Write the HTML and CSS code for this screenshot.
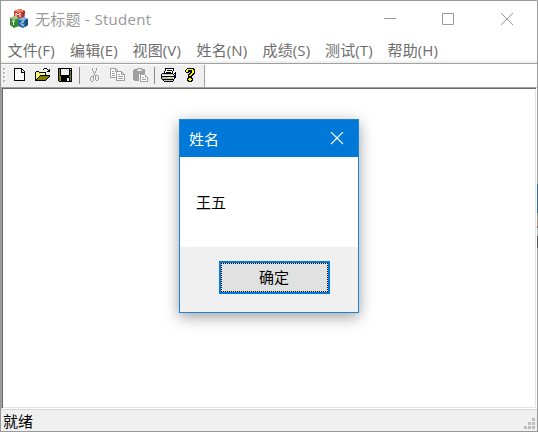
FILE: index.html
```
<!DOCTYPE html>
<html lang="zh-CN">
<head>
<meta charset="utf-8">
<title>无标题 - Student</title>
<link rel="stylesheet" href="styles.css">
</head>
<body>
<div class="window">
  <header class="titlebar">
    <svg class="app-icon" width="20" height="21" viewBox="0 0 20 21">
      <path fill="#c83a2c" d="M5 3l6-2 5 2-1 8-6 1-4-2z"/>
      <path fill="#ed8064" d="M5 3l6-2 5 2-6 2z"/>
      <path fill="#a52d24" d="M14 3.500l2-.5-1 8-2 1z"/>
      <path fill="#388b34" d="M1 10l5-2 4 2v8l-5 2-4-3z"/>
      <path fill="#a1c77d" d="M1 10l5-2 4 2-5 2z"/>
      <path fill="#266ba6" d="M9 11l6-2 4 2v6l-5 3-5-2z"/>
      <path fill="#85b8dc" d="M9 11l6-2 4 2-5 2z"/>
      <path fill="#184f82" d="M16 12l3-1v6l-3 2z"/>
      <path fill="none" stroke="#fff" stroke-width="1" d="M7 9V5l2 2 2-2v4M3 13h3M4.500 13v4M15 14c-4-1-4 4 0 3"/>
    </svg>
    <h1 class="title">无标题 - Student</h1>
    <div class="controls">
      <svg width="58" height="36" viewBox="0 0 58 36"><path d="M13 17.500h12"/></svg>
      <svg width="58" height="36" viewBox="0 0 58 36"><path d="M13.500 12.500h11v11h-11z"/></svg>
      <svg width="49" height="36" viewBox="0 0 49 36"><path d="M14 12l12 12M26 12L14 24"/></svg>
    </div>
  </header>
  <nav class="menubar">
    <span>文件(F)</span><span>编辑(E)</span><span class="wide">视图(V)</span><span class="widest">姓名(N)</span><span>成绩(S)</span><span>测试(T)</span><span>帮助(H)</span>
  </nav>
  <div class="toolbar-row">
    <div class="toolbar">
      <div class="grip"><i></i><i></i><i></i><i></i></div>
      <svg class="tool" viewBox="0 0 16 16"><path fill="#fff" d="M3 2h6v4h4v8H3z"/><path fill="#000" d="M2 1h8v1H2zM2 2h1v12H2zM2 13h11v1H2zM12 5h1v9h-1zM9 2h1v4H9zM10 2h1v1h-1zM11 3h1v1h-1zM12 4h1v1h-1zM9 5h4v1H9z"/></svg>
      <svg class="tool" viewBox="0 0 16 16"><path fill="#fff" d="M1 5h3v1h6v3H5v1H4v1H3v1H2v1H1z"/><path fill="#ff0" d="M1 5h1v1H1zM3 5h1v1H3zM2 6h1v1H2zM4 6h1v1H4zM6 6h1v1H6zM8 6h1v1H8zM1 7h1v1H1zM3 7h1v1H3zM5 7h1v1H5zM7 7h1v1H7zM9 7h1v1H9zM2 8h1v1H2zM4 8h1v1H4zM1 9h1v1H1zM3 9h1v1H3zM2 10h1v1H2zM1 11h1v1H1z"/><path fill="#808000" d="M5 9h9v1h-1v1h-1v1h-1v1H2v-1h1v-1h1v-1h1z"/><path fill="#000" d="M1 4h3v1H1zM0 5h1v9H0zM4 5h7v1H4zM10 6h1v2h-1zM5 8h10v1H5zM4 9h1v1H4zM3 10h1v1H3zM2 11h1v1H2zM1 12h1v1H1zM14 9h1v1h-1zM13 10h1v1h-1zM12 11h1v1h-1zM11 12h1v1h-1zM0 13h11v1H0zM9 1h3v1H9zM8 2h1v1H8zM12 2h1v1h-1zM14 2h1v3h-3V4h1V3h1z"/></svg>
      <svg class="tool" viewBox="0 0 16 16"><path fill="#000" d="M0 1h14v14H1v-1H0z"/><path fill="#808000" d="M1 2h1v7h1v1h8V9h1V4h1v10h-1v-4H3v4H1z"/><path fill="#f0f0f0" d="M3 2h8v6H3zM12 2h1v1h-1zM9 11h2v3H9z"/></svg>
      <i class="separator"></i>
      <svg class="tool gray" viewBox="0 0 16 16"><path fill="#fff" d="M6 2h1v4h1v2H7V6H6zM10 2h1v4h-1z"/><path d="M5 1h1v3H5zM9 1h1v3H9zM6 4h1v2H6zM8 4h1v2H8zM7 6h1v2H7zM6 8h1v2H6zM8 8h1v1H8zM4 9h2v1H4zM3 10h1v4H3zM4 14h2v1H4zM6 10h1v4H6zM8 9h1v4H8zM9 8h2v1H9zM11 9h1v4h-1zM9 13h2v1H9z"/></svg>
      <svg class="tool gray" viewBox="0 0 16 16"><path fill="#fff" d="M1 2h5v3h3v6H1zM7 5h5v3h3v6H7z"/><path d="M0 1h6v1H0zM0 2h1v9H0zM1 10h5v1H1zM5 2h1v3H5zM6 2h1v1H6zM7 3h1v1H7zM2 4h2v1H2zM2 6h3v1H2zM2 8h3v1H2zM6 4h6v1H6zM6 5h1v9H6zM7 13h8v1H7zM14 7h1v7h-1zM11 5h1v3h-1zM12 5h1v1h-1zM13 6h1v1h-1zM12 7h3v1h-3zM8 7h2v1H8zM8 9h5v1H8zM8 11h5v1H8z"/></svg>
      <svg class="tool gray" viewBox="0 0 16 16"><path d="M1 2h3V1h5v1h3v5H6v7H1v-1H0V3h1z"/><path fill="#e8e8e8" d="M4 3h1V2h3v1h1v1H4z"/><path fill="#fff" d="M8 8h4v2h2v4H8z"/><path d="M7 7h5v1H7zM7 8h1v7H7zM8 14h7v1H8zM14 10h1v4h-1zM12 8h1v3h-1zM13 9h1v1h-1zM9 10h2v1H9zM9 12h4v1H9z"/></svg>
      <i class="separator"></i>
      <svg class="tool print" viewBox="0 0 16 16"><path fill="#fff" d="M5 2h8l-2 5H3zM1 8h11v4H1z"/><path fill="#000" d="M4 1h9v1H4zM4 2h1v2H4zM3 4h1v3H3zM12 2h1v2h-1zM11 4h1v2h-1zM6 3h5v1H6zM5 5h5v1H5zM1 6h11v1H1zM0 7h1v5H0zM12 7h1v1h-1zM13 6h1v1h-1zM14 5h1v6h-1zM1 9h12v1H1zM13 8h1v4h-1zM1 12h12v1H1zM2 13h1v1H2zM3 14h9v1H3zM12 12h1v2h-1z"/><path fill="#c0c0c0" d="M2 7h10v1H2zM1 10h11v2H1zM3 13h9v1H3z"/><path fill="#ff0" d="M7 10h3v1H7z"/></svg>
      <svg class="tool" viewBox="0 0 16 16"><path fill="#000" d="M3 1h7v1h1v5h-1v1H9v1H8v1H4V7h1V6h1V5H5v1H2V5H1V3h1V2h1zM4 10h4v1h1v3H8v1H4v-1H3v-3h1z"/><path fill="#ff0" d="M3 2h6v1h1v3H9v1H8v1H7v1H5V8h1V7h1V6h1V3H4v2H2V3h1zM5 11h2v1h1v1H7v1H5v-1H4v-1h1z"/></svg>
    </div>
  </div>
  <main class="client">
    <section class="dialog">
      <div class="dialog-title"><span>姓名</span><svg width="14" height="14" viewBox="0 0 14 14"><path fill="none" stroke="#fff" stroke-width="1.100" d="M1 0l12 12M13 0L1 12"/></svg></div>
      <p class="message">王五</p>
      <div class="actions"><button class="ok"><span>确定</span></button></div>
    </section>
  </main>
  <footer class="status"><span>就绪</span>
    <svg width="12" height="12" viewBox="0 0 12 12"><path fill="#bfbfbf" d="M8 0h3v3H8zM4 4h3v3H4zM8 4h3v3H8zM0 8h3v3H0zM4 8h3v3H4zM8 8h3v3H8z"/></svg>
  </footer>
</div>
</body>
</html>
```
FILE: styles.css
```
* { box-sizing: border-box; }
body { margin: 0; font: 15px/20px "Open Sans", "Noto Sans CJK SC", sans-serif; }
.window { width: 538px; height: 432px; display: flex; flex-direction: column; border: 1px solid #999; background: #fff; overflow: hidden; }
.window { border-right-color: transparent; background: linear-gradient(#999 184px, #2f6ba5 184px 213px, #999 213px 219px, #b98a70 219px 226px, #555 226px 228px, #bbb 228px 236px, #555 236px 248px, #999 248px) right / 1px 100% no-repeat border-box, #fff; }
.titlebar { height: 37px; flex: none; display: flex; align-items: flex-start; padding-left: 8px; }
.app-icon { margin-top: 7px; }
.title { margin: 8px 0 0 6px; font-size: 15px; line-height: 20px; font-weight: 400; letter-spacing: .3px; color: #999; white-space: nowrap; }
.controls { display: flex; margin-left: auto; }
.controls svg { fill: none; stroke: #999; }
.controls svg:last-child { margin-right: 1px; }
.menubar { height: 23px; flex: none; display: flex; padding: 2px 0 0 6.500px; color: #6d6d6d; letter-spacing: .15px; }
.menubar span { flex: none; width: 62.500px; white-space: nowrap; }
.menubar .wide { width: 64px; }
.menubar .widest { width: 66px; }
.toolbar-row { height: 26px; flex: none; border-top: 2px solid #f0f0f0; padding-top: 2px; background: linear-gradient(#a0a0a0 1px, #fff 1px); }
.toolbar { width: 204px; height: 22px; display: flex; padding: 2px 0 0 2px; background: #f0f0f0; border-right: 1px solid #a0a0a0; }
.grip { width: 9px; flex: none; display: flex; flex-direction: column; gap: 2px; padding-top: 1px; }
.grip i { width: 2px; height: 2px; background: #b8b8b8; box-shadow: 1px 1px #fff; }
.tool { width: 16px; height: 16px; flex: none; margin-right: 7px; shape-rendering: crispEdges; }
.print { margin-left: -1px; }
.gray { fill: #a0a0a0; }
.separator { width: 1px; height: 17px; flex: none; margin: 0 7px 0 -2px; background: #8c8c8c; }
.client { height: 322px; flex: none; border: 1px solid; border-color: #a0a0a0 #fff #fff #a0a0a0; box-shadow: inset 1px 1px #696969, inset -1px -1px #e3e3e3; padding: 31px 0 0 177px; }
.dialog { width: 180px; height: 194px; border: 1px solid #1883d7; background: #fff; box-shadow: 0 4px 14px rgba(0,0,0,.38); }
.dialog-title { height: 37px; display: flex; justify-content: space-between; align-items: center; padding: 0 14px 0 9px; background: #0078d7; color: #fff; }
.message { height: 90px; margin: 0; padding: 35px 16px 0; color: #000; }
.actions { height: 65px; padding: 14px 0 0 39px; background: #f0f0f0; }
.ok { width: 111px; height: 33px; padding: 0; border: 2px solid #0078d7; background: #e1e1e1; font: inherit; color: #000; }
.ok span { display: flex; align-items: center; justify-content: center; height: 29px; padding: 0 1px 2px 0; border: 1px dotted #000; }
.status { height: 22px; flex: none; display: flex; justify-content: space-between; padding: 1px 1px 0 2px; border-top: 1px solid #d7d7d7; background: #f0f0f0; color: #000; }
.status svg { margin-top: 7px; }
```
